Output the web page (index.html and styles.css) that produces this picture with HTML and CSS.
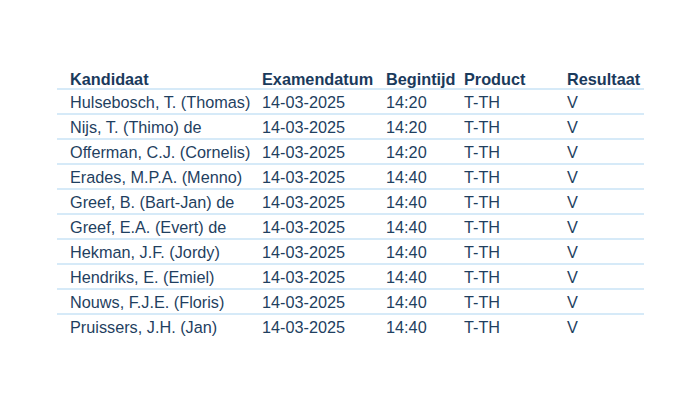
FILE: index.html
```html
<!DOCTYPE html>
<html>
<head>
<meta charset="utf-8">
<link rel="stylesheet" href="styles.css">
</head>
<body>
<div class="table">
  <div class="row head">
    <div>Kandidaat</div><div>Examendatum</div><div>Begintijd</div><div>Product</div><div>Resultaat</div>
  </div>
  <div class="row"><div>Hulsebosch, T. (Thomas)</div><div>14-03-2025</div><div>14:20</div><div>T-TH</div><div>V</div></div>
  <div class="row"><div>Nijs, T. (Thimo) de</div><div>14-03-2025</div><div>14:20</div><div>T-TH</div><div>V</div></div>
  <div class="row"><div>Offerman, C.J. (Cornelis)</div><div>14-03-2025</div><div>14:20</div><div>T-TH</div><div>V</div></div>
  <div class="row"><div>Erades, M.P.A. (Menno)</div><div>14-03-2025</div><div>14:40</div><div>T-TH</div><div>V</div></div>
  <div class="row"><div>Greef, B. (Bart-Jan) de</div><div>14-03-2025</div><div>14:40</div><div>T-TH</div><div>V</div></div>
  <div class="row"><div>Greef, E.A. (Evert) de</div><div>14-03-2025</div><div>14:40</div><div>T-TH</div><div>V</div></div>
  <div class="row"><div>Hekman, J.F. (Jordy)</div><div>14-03-2025</div><div>14:40</div><div>T-TH</div><div>V</div></div>
  <div class="row"><div>Hendriks, E. (Emiel)</div><div>14-03-2025</div><div>14:40</div><div>T-TH</div><div>V</div></div>
  <div class="row"><div>Nouws, F.J.E. (Floris)</div><div>14-03-2025</div><div>14:40</div><div>T-TH</div><div>V</div></div>
  <div class="row"><div>Pruissers, J.H. (Jan)</div><div>14-03-2025</div><div>14:40</div><div>T-TH</div><div>V</div></div>
</div>
</body>
</html>
```
FILE: styles.css
```css
html, body {
  margin: 0;
  padding: 0;
  background: #ffffff;
}
body {
  font-family: "Liberation Sans", Arial, sans-serif;
  font-size: 16.25px;
  color: #1f3f5f;
}
.table {
  margin: 71px 0 0 57px;
  width: 587px;
}
.row {
  display: grid;
  grid-template-columns: 192px 124px 78px 103px auto;
  padding: 1px 0 0 13px;
  line-height: 22px;
  white-space: nowrap;
}
.row + .row:not(:nth-child(2)) {
  border-top: 2px solid #d6eaf8;
}
.row.head {
  padding-top: 0;
  line-height: 17px;
  font-weight: bold;
  color: #1a3a5c;
  border-bottom: 2px solid #d6eaf8;
}
```
